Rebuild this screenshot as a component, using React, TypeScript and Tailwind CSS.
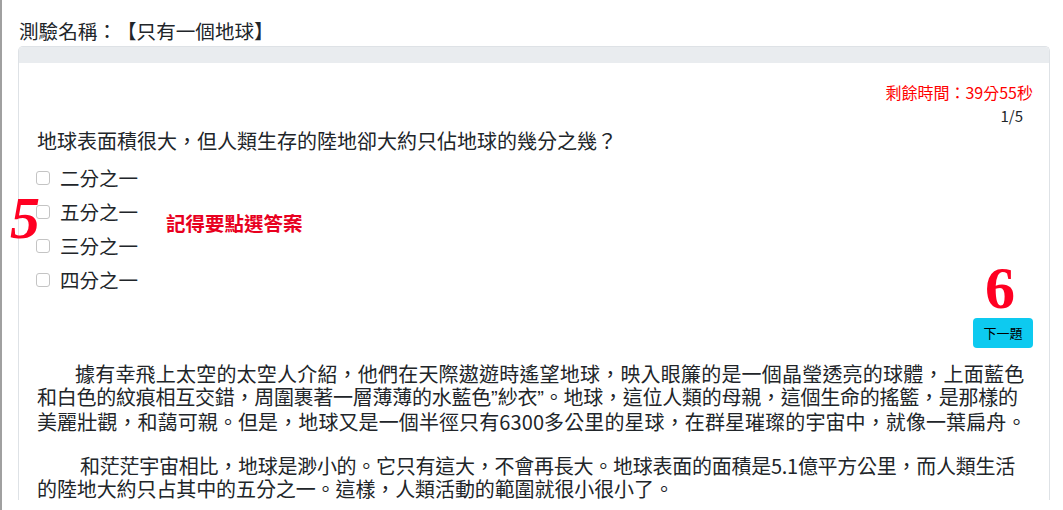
import { useState } from "react"

const options = ["二分之一", "五分之一", "三分之一", "四分之一"]

const Q = () => <span className="font-['Liberation_Sans',sans-serif] tracking-normal">{"\u201d"}</span>

const App = () => {
  const [checked, setChecked] = useState<number | null>(null)

  return (
    <div
      lang="zh-Hant-TW"
      className="relative h-[510px] w-[1063px] overflow-hidden bg-white text-[#212529] border-l-2 border-[#a0a0a0] [text-spacing-trim:space-all] font-['Noto_Sans_CJK_TC','Noto_Sans',sans-serif]"
    >
      <div className="pl-[17px] pt-[19px] text-[19.6px] leading-[24px]">測驗名稱：【只有一個地球】</div>

      <div className="ml-[16px] mt-[3px] w-[1032px] rounded-t-[5px] border border-b-0 border-[#dee2e6]">
        <div className="h-[16px] rounded-t-[4px] bg-[#e9ecef]" />
        <div className="pl-[17px] pr-[16px]">
          <div className="pt-[19px] text-right text-[16px] leading-[20px] text-[#ff0000]">剩餘時間：39分55秒</div>
          <div className="pr-[10px] pt-[4px] text-right text-[15px] leading-[20px]">1/5</div>
          <div className="mt-[3px] pl-[1px] text-[20px] leading-[24px]">地球表面積很大，但人類生存的陸地卻大約只佔地球的幾分之幾？</div>

          <div className="mt-[8px] flex flex-col">
            {options.map((o, i) => (
              <label key={o} className="flex h-[34px] items-center gap-[10px] text-[19.5px]">
                <span
                  onClick={() => setChecked(i)}
                  className={`h-[14px] w-[14px] rounded-[3px] border ${checked === i ? "border-[#0d6efd] bg-[#0d6efd]" : "border-[#c4c4c4] bg-white"}`}
                />
                <span>{o}</span>
              </label>
            ))}
          </div>

          <div className="mt-[21px] flex justify-end">
            <button className="h-[30px] w-[60px] rounded-[4px] bg-[#0dcaf0] text-[13px] text-black">下一題</button>
          </div>

          <div className="mt-[14px] pl-[1px] text-[20px] leading-[23px] whitespace-nowrap">
            <div className="pl-[38px] tracking-[0.2px]">據有幸飛上太空的太空人介紹，他們在天際遨遊時遙望地球，映入眼簾的是一個晶瑩透亮的球體，上面藍色</div>
            <div className="tracking-[-0.26px]">
              和白色的紋痕相互交錯，周圍裹著一層薄薄的水藍色<Q />紗衣<Q />。地球，這位人類的母親，這個生命的搖籃，是那樣的
            </div>
            <div className="tracking-[0.1px]">美麗壯觀，和藹可親。但是，地球又是一個半徑只有6300多公里的星球，在群星璀璨的宇宙中，就像一葉扁舟。</div>
          </div>
          <div className="mt-[21px] pl-[1px] text-[20px] leading-[23px] whitespace-nowrap">
            <div className="pl-[43px] tracking-[-0.26px]">和茫茫宇宙相比，地球是渺小的。它只有這大，不會再長大。地球表面的面積是5.1億平方公里，而人類生活</div>
            <div className="tracking-[-0.1px]">的陸地大約只占其中的五分之一。這樣，人類活動的範圍就很小很小了。</div>
          </div>
        </div>
      </div>

      <div className="absolute left-[164px] top-[211px] text-[19.5px] leading-[24px] font-bold text-[#e8001e]">記得要點選答案</div>
      <div className="absolute left-[8px] top-[188px] font-['Liberation_Serif',serif] text-[60px] font-bold italic leading-none text-[#ff0022]">5</div>
      <div className="absolute left-[983px] top-[258px] font-['Liberation_Serif',serif] text-[60px] font-bold leading-none text-[#ff0022]">6</div>
    </div>
  )
}

export default App
